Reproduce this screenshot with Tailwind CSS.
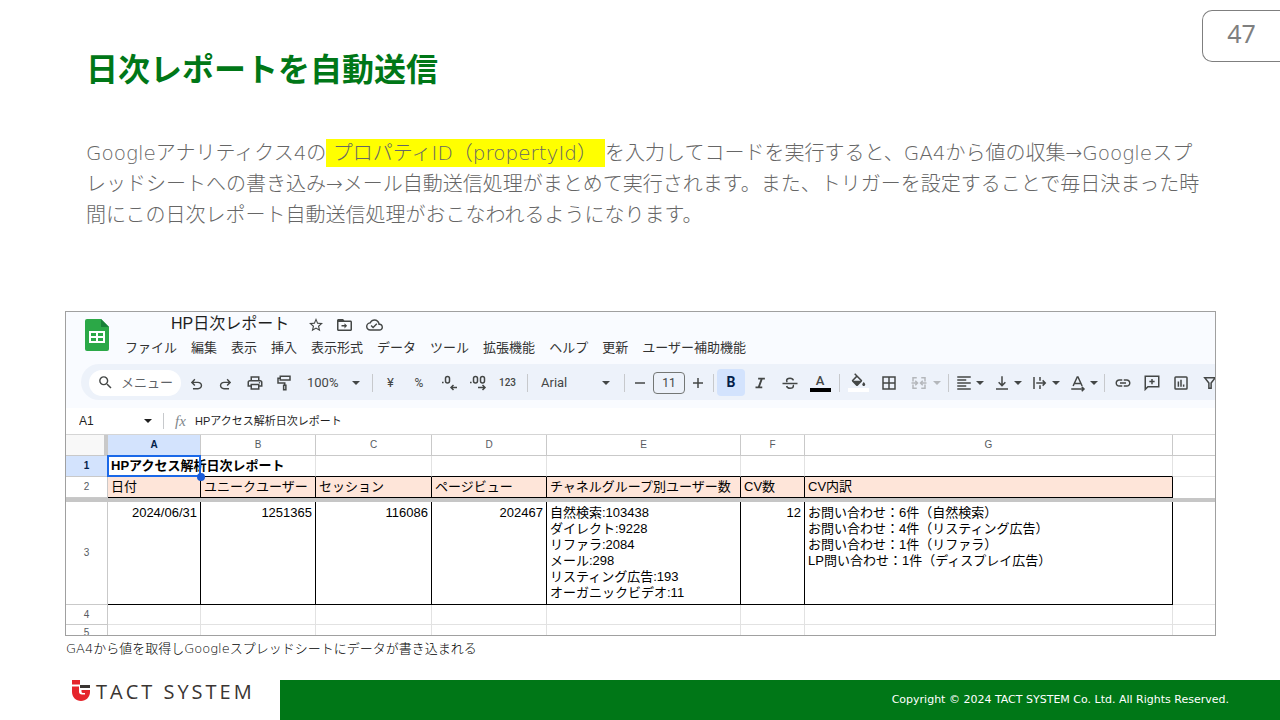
<!DOCTYPE html>
<html lang="ja">
<head>
<meta charset="utf-8">
<title>日次レポートを自動送信</title>
<script src="https://cdn.jsdelivr.net/npm/@tailwindcss/browser@4"></script>
</head>
<body class="bg-white">
<svg class="hidden" aria-hidden="true">
  <symbol id="caret" viewBox="0 0 8 8"><path d="M0 2h8L4 6z" fill="currentColor"/></symbol>
</svg>
<div class="flex min-h-screen flex-col overflow-hidden font-['DejaVu_Sans','Noto_Sans_CJK_JP',sans-serif]">
  <header class="flex items-start justify-between pt-[10px]">
    <h1 class="pt-[33px] pl-[86px] font-['Noto_Sans_CJK_JP',sans-serif] text-[32px] leading-[48px] font-bold text-[#007717]">日次レポートを自動送信</h1>
    <div class="flex h-[52px] w-[78px] justify-center rounded-l-[10px] border border-r-0 border-[#7f7f7f] pt-[6px] font-['Noto_Sans',sans-serif] text-[25px] leading-[32px] text-[#7f7f7f]">47</div>
  </header>

  <main class="flex-1">
    <p class="mt-[47px] ml-[86px] text-[20px] leading-[31px] font-light whitespace-nowrap text-[#666666]">Googleアナリティクス4の<mark class="bg-[#ffff00] py-[2px] pr-[8px] text-[#666666]"> プロパティID（propertyId）</mark>を入力してコードを実行すると、GA4から値の収集→Googleスプ<br>レッドシートへの書き込み→メール自動送信処理がまとめて実行されます。また、トリガーを設定することで毎日決まった時<br>間にこの日次レポート自動送信処理がおこなわれるようになります。</p>

    <figure class="mt-[80px] mr-[64px] ml-[65px]">
      <div class="h-[325px] overflow-hidden border border-[#a0a0a0] bg-[#f9fbff] font-['Liberation_Sans','Noto_Sans_CJK_JP',sans-serif] text-[#1f1f1f]">
        <div class="flex h-[52px] pl-[19px]">
          <svg class="mt-[7px] h-[32px] w-[24px]" viewBox="0 0 24 32"><path d="M2 0h14l8 8v22a2 2 0 0 1-2 2H2a2 2 0 0 1-2-2V2a2 2 0 0 1 2-2z" fill="#2ba847"/><path d="M16 0l8 8h-8z" fill="#188038"/><path d="M4 12h16v12H4zM6 14v3h5v-3zM13 14v3h5v-3zM6 19v3h5v-3zM13 19v3h5v-3z" fill="#fff" fill-rule="evenodd"/></svg>
          <div class="flex flex-col">
            <div class="flex h-[24px] items-center gap-[14px] pl-[62px] text-[#444746]">
              <span class="mr-[6px] text-[16px] leading-[24px] text-[#1f1f1f]">HP日次レポート</span>
              <button aria-label="スター"><svg class="mt-[2px] size-[14px]" viewBox="2 2 20 20" fill="currentColor"><path d="M22 9.24l-7.19-.62L12 2 9.19 8.63 2 9.24l5.46 4.73L5.82 21 12 17.27 18.18 21l-1.63-7.03L22 9.24zM12 15.4l-3.76 2.27 1-4.28-3.32-2.88 4.38-.38L12 6.1l1.71 4.04 4.38.38-3.32 2.88 1 4.28L12 15.4z"/></svg></button>
              <button aria-label="移動"><svg class="mt-[2px] h-[12px] w-[15px]" viewBox="2 4 20 16" fill="currentColor"><path d="M20 6h-8l-2-2H4c-1.100 0-2 .9-2 2v12c0 1.100.9 2 2 2h16c1.100 0 2-.9 2-2V8c0-1.100-.9-2-2-2zm0 12H4V8h16v10zM12 9.500l3.500 3.500-3.500 3.500v-2.500H8v-2h4z"/></svg></button>
              <button aria-label="保存状態"><svg class="mt-[2px] h-[12px] w-[17px]" viewBox="0 4 24 16" fill="currentColor"><path d="M19.350 10.040C18.670 6.590 15.640 4 12 4 9.110 4 6.610 5.640 5.350 8.040 2.340 8.360 0 10.910 0 14c0 3.310 2.690 6 6 6h13c2.760 0 5-2.240 5-5 0-2.640-2.050-4.780-4.650-4.960zM19 18H6c-2.210 0-4-1.790-4-4s1.790-4 4-4h.71C7.370 7.690 9.480 6 12 6c3.040 0 5.500 2.460 5.500 5.500v.5H19c1.660 0 3 1.340 3 3s-1.340 3-3 3zM10 14.200l-2.100-2.100-1.400 1.400L10 17l6-6-1.400-1.400z"/></svg></button>
            </div>
            <nav class="flex gap-[14px] pl-[16px] text-[13px] leading-[24px] whitespace-nowrap text-[#333]">
              <button>ファイル</button><button>編集</button><button>表示</button><button>挿入</button><button>表示形式</button><button>データ</button><button>ツール</button><button>拡張機能</button><button>ヘルプ</button><button>更新</button><button>ユーザー補助機能</button>
            </nav>
          </div>
        </div>

        <div class="mb-2 ml-[15px] flex h-[36px] items-center overflow-hidden rounded-l-full bg-[#edf2fa] pt-px pl-2 font-['Roboto','Noto_Sans_CJK_JP',sans-serif] text-[13px] text-[#444746] [&>*]:shrink-0">
          <label class="flex h-[26px] w-[92px] items-center gap-[7px] rounded-full bg-white pl-[8px]">
            <svg class="size-[17px] shrink-0" viewBox="0 0 24 24" fill="currentColor"><path d="M15.500 14h-.79l-.28-.27A6.471 6.471 0 0 0 16 9.500 6.500 6.500 0 1 0 9.500 16c1.610 0 3.090-.59 4.230-1.570l.27.28v.79l5 4.990L20.490 19l-4.990-5zm-6 0C7.010 14 5 11.990 5 9.500S7.010 5 9.500 5 14 7.010 14 9.500 11.990 14 9.500 14z"/></svg>
            <input class="w-[54px] text-[13px] placeholder-[#5f6368]" placeholder="メニュー" aria-label="メニュー">
          </label>
          <button class="flex w-[30px] justify-center pt-[3px]" aria-label="元に戻す"><svg class="size-[17px]" viewBox="0 0 24 24" fill="currentColor"><path d="M7 19v-2h7.100q1.575 0 2.738-1T18 13.500 16.837 11 14.100 10H7.800l2.600 2.600L9 14 4 9l5-5 1.400 1.400L7.800 8h6.300q2.425 0 4.163 1.575T20 13.500t-1.737 3.925T14.100 19z"/></svg></button>
          <button class="flex w-[29px] justify-center pt-[3px]" aria-label="やり直し"><svg class="size-[17px]" viewBox="0 0 24 24" fill="currentColor"><path transform="matrix(-1 0 0 1 24 0)" d="M7 19v-2h7.100q1.575 0 2.738-1T18 13.500 16.837 11 14.100 10H7.800l2.600 2.600L9 14 4 9l5-5 1.400 1.400L7.800 8h6.300q2.425 0 4.163 1.575T20 13.500t-1.737 3.925T14.100 19z"/></svg></button>
          <button class="flex w-[29px] justify-center" aria-label="印刷"><svg class="size-[18px]" viewBox="0 0 24 24" fill="currentColor"><path d="M19 8h-1V3H6v5H5c-1.660 0-3 1.340-3 3v6h4v4h12v-4h4v-6c0-1.660-1.340-3-3-3zM8 5h8v3H8V5zm8 12v2H8v-4h8v2zm2-2v-2H6v2H4v-4c0-.55.45-1 1-1h14c.55 0 1 .45 1 1v4h-2z"/><circle cx="18" cy="11.500" r="1"/></svg></button>
          <button class="flex w-[29px] justify-center" aria-label="書式を貼り付け"><svg class="size-[18px]" viewBox="0 0 24 24" fill="none" stroke="currentColor" stroke-width="2"><path d="M7 3h13v5H7zM7 5.500H4V12h9v3"/><path d="M11.500 15h3v6h-3z"/></svg></button>
          <div class="relative w-[69px]">
            <select class="w-full appearance-none pl-[9px] leading-[20px]" aria-label="ズーム"><option>100%</option></select>
            <svg class="pointer-events-none absolute top-[6px] right-[7px] size-[8px]"><use href="#caret"/></svg>
          </div>
          <div class="mr-[4px] ml-[5px] h-[18px] w-px bg-[#c7c9cc]"></div>
          <button class="w-[27px]">¥</button>
          <button class="w-[30px] text-[12px]">%</button>
          <button class="flex w-[29px] justify-center" aria-label="小数点以下の桁数を減らす"><svg class="h-[18px] w-[18px]" viewBox="0 0 18 18" fill="none" stroke="currentColor" stroke-width="1.500"><path d="M2 8.500h1.600" /><rect x="5.500" y="2.500" width="4" height="6.500" rx="2"/><path d="M17 13.500h-6M13.500 11l-2.500 2.500 2.500 2.500"/></svg></button>
          <button class="flex w-[30px] justify-center" aria-label="小数点以下の桁数を増やす"><svg class="h-[18px] w-[18px]" viewBox="0 0 18 18" fill="none" stroke="currentColor" stroke-width="1.500"><path d="M1 8.500h1.600"/><rect x="4.500" y="2.500" width="4" height="6.500" rx="2"/><rect x="11.500" y="2.500" width="4" height="6.500" rx="2"/><path d="M9 13.500h7M13.500 11l2.500 2.500-2.500 2.500"/></svg></button>
          <button class="w-[29px] text-[10px] font-medium">123</button>
          <div class="mr-[4px] ml-[5px] h-[18px] w-px bg-[#c7c9cc]"></div>
          <div class="relative w-[87px]">
            <select class="w-full appearance-none pl-[9px] leading-[20px]" aria-label="フォント"><option>Arial</option></select>
            <svg class="pointer-events-none absolute top-[6px] right-[9px] size-[8px]"><use href="#caret"/></svg>
          </div>
          <div class="mr-[4px] ml-[5px] h-[18px] w-px bg-[#c7c9cc]"></div>
          <button class="flex w-[22px] justify-center" aria-label="縮小"><svg class="size-[10px]" viewBox="0 0 10 10"><path d="M0 5h10" stroke="currentColor" stroke-width="1.500"/></svg></button>
          <input class="mx-[2px] h-[22px] w-[32px] rounded-[4px] border border-[#747775] text-center text-[12px]" value="11" aria-label="フォントサイズ">
          <button class="flex w-[22px] justify-center" aria-label="拡大"><svg class="size-[10px]" viewBox="0 0 10 10"><path d="M0 5h10M5 0v10" stroke="currentColor" stroke-width="1.500"/></svg></button>
          <div class="mr-[3px] ml-[4px] h-[18px] w-px bg-[#c7c9cc]"></div>
          <button class="h-[27px] w-[28px] rounded-[4px] bg-[#d3e3fd] text-[14px] font-bold text-[#041e49]">B</button>
          <button class="flex w-[30px] justify-center" aria-label="斜体"><svg class="size-[18px]" viewBox="0 0 24 24" fill="currentColor"><path d="M9.500 5v2.400h3.200L9.300 16.600H6V19h9v-2.400h-3l3.400-9.200H18.500V5z"/></svg></button>
          <button class="flex w-[30px] justify-center" aria-label="取り消し線"><svg class="size-[18px]" viewBox="0 0 24 24" fill="none" stroke="currentColor" stroke-width="2"><path d="M2 12.500h20M16.500 8.500C16 6.500 14.500 5.500 12 5.500c-3 0-4.500 1.500-4.500 3 0 .8.300 1.500 1 2M7.500 16c.5 2 2 3 4.500 3 3 0 4.500-1.500 4.500-3 0-.5-.1-1-.4-1.400"/></svg></button>
          <button class="flex w-[30px] flex-col items-center text-[13px] leading-[14px] font-medium">A<span class="h-[4px] w-[21px] bg-black"></span></button>
          <div class="mx-[4px] h-[18px] w-px bg-[#c7c9cc]"></div>
          <button class="flex w-[29px] flex-col items-center" aria-label="塗りつぶし"><svg class="h-[14px] w-[15px]" viewBox="2 0 20 18" fill="currentColor"><path d="M16.560 8.940L7.620 0 6.210 1.410l2.380 2.380-5.150 5.150c-.59.59-.59 1.540 0 2.120l5.500 5.500c.29.29.68.44 1.060.44s.77-.15 1.060-.44l5.500-5.500c.59-.58.59-1.530 0-2.120zM5.210 10L10 5.210 14.790 10zM19 11.500s-2 2.170-2 3.500c0 1.100.9 2 2 2s2-.9 2-2c0-1.330-2-3.500-2-3.500z"/></svg><span class="mt-px h-[4px] w-[21px] bg-white"></span></button>
          <button class="flex w-[31px] justify-center" aria-label="枠線"><svg class="size-[18px]" viewBox="0 0 24 24" fill="none" stroke="currentColor" stroke-width="2"><path d="M4 4h16v16H4zM12 4v16M4 12h16"/></svg></button>
          <button class="flex w-[40px] items-center pl-[6px] text-[#b4b7bb]" aria-label="セルを結合"><svg class="mr-[5px] size-[18px]" viewBox="0 0 24 24" fill="none" stroke="currentColor" stroke-width="2"><path d="M9 5H4v5M15 5h5v5M9 19H4v-5M15 19h5v-5M2 12h7M22 12h-7M7 9l3 3-3 3M17 9l-3 3 3 3"/></svg><svg class="size-[8px]"><use href="#caret"/></svg></button>
          <div class="mr-[3px] ml-[4px] h-[18px] w-px bg-[#c7c9cc]"></div>
          <button class="mr-1 flex w-[34px] items-center gap-[3px] pl-[3px]" aria-label="水平方向の配置"><svg class="size-[18px] shrink-0" viewBox="0 0 24 24" fill="none" stroke="currentColor" stroke-width="2"><path d="M3 4h18M3 8h12M3 12h18M3 16h12M3 20h18"/></svg><svg class="size-[8px] shrink-0"><use href="#caret"/></svg></button>
          <button class="mr-1 flex w-[34px] items-center gap-[3px] pl-[3px]" aria-label="垂直方向の配置"><svg class="size-[18px] shrink-0" viewBox="0 0 24 24" fill="none" stroke="currentColor" stroke-width="2"><path d="M12 3v12M7.500 11l4.500 4.500 4.500-4.500M4 20h16"/></svg><svg class="size-[8px] shrink-0"><use href="#caret"/></svg></button>
          <button class="mr-1 flex w-[34px] items-center gap-[3px] pl-[3px]" aria-label="テキストの折り返し"><svg class="size-[18px] shrink-0" viewBox="0 0 24 24" fill="none" stroke="currentColor" stroke-width="2"><path d="M4 4v16M12 4v5M12 15v5M7 12h12M15.500 8.500l3.500 3.500-3.500 3.500"/></svg><svg class="size-[8px] shrink-0"><use href="#caret"/></svg></button>
          <button class="flex w-[34px] items-center gap-[3px] pl-[3px]" aria-label="テキストの回転"><svg class="size-[18px] shrink-0" viewBox="0 0 24 24" fill="none" stroke="currentColor" stroke-width="2"><path d="M5.500 16L11 4h1l5.500 12M7.500 12.500h8M3 20h17M17 17l3 3-3 3"/></svg><svg class="size-[8px] shrink-0"><use href="#caret"/></svg></button>
          <div class="mr-[3px] ml-[4px] h-[18px] w-px bg-[#c7c9cc]"></div>
          <button class="flex w-[29px] justify-center" aria-label="リンク"><svg class="size-[18px]" viewBox="0 0 24 24" fill="currentColor"><path d="M3.900 12c0-1.710 1.390-3.100 3.100-3.100h4V7H7c-2.760 0-5 2.240-5 5s2.240 5 5 5h4v-1.900H7c-1.710 0-3.100-1.390-3.100-3.100zM8 13h8v-2H8v2zm9-6h-4v1.900h4c1.710 0 3.100 1.390 3.100 3.100s-1.390 3.100-3.100 3.100h-4V17h4c2.760 0 5-2.240 5-5s-2.240-5-5-5z"/></svg></button>
          <button class="flex w-[29px] justify-center" aria-label="コメント"><svg class="size-[18px]" viewBox="0 0 24 24" fill="none" stroke="currentColor" stroke-width="2"><path d="M3 3h18v14H6.500L3 20.500zM12 6.500v7M8.500 10h7"/></svg></button>
          <button class="flex w-[29px] justify-center" aria-label="グラフ"><svg class="size-[18px]" viewBox="0 0 24 24" fill="none" stroke="currentColor" stroke-width="2"><rect x="4" y="4" width="16" height="16" rx="1"/><path d="M8.500 10v7M12 7.500V17M15.500 14v3"/></svg></button>
          <button class="flex w-[29px] justify-center" aria-label="フィルタ"><svg class="size-[18px]" viewBox="0 0 24 24" fill="none" stroke="currentColor" stroke-width="2"><path d="M5 5h14l-5.500 7v7h-3v-7z"/></svg></button>
        </div>

        <div class="flex h-[26px] items-center bg-white text-[12px]">
          <div class="relative w-[97px]">
            <select class="w-full appearance-none pl-[13px] leading-[20px]" aria-label="セル"><option>A1</option></select>
            <svg class="pointer-events-none absolute top-[6px] right-[11px] size-[8px]"><use href="#caret"/></svg>
          </div>
          <div class="h-[16px] w-px bg-[#c7c9cc]"></div>
          <span class="ml-[11px] w-[20px] font-['Liberation_Serif',serif] text-[15px] text-[#80868b] italic">fx</span>
          <input class="min-w-0 flex-1 text-[11px]" value="HPアクセス解析日次レポート" aria-label="数式">
        </div>

        <table class="w-full table-fixed border-separate border-spacing-0 border-t border-[#d5d5d5] bg-white text-left text-[13px] leading-[16px] text-black [&_td]:whitespace-nowrap">
          <colgroup><col class="w-[42px]"><col class="w-[93px]"><col class="w-[115px]"><col class="w-[116px]"><col class="w-[115px]"><col class="w-[194px]"><col class="w-[64px]"><col class="w-[368px]"><col></colgroup>
          <thead class="text-center text-[10px] text-[#575b5f]">
            <tr class="h-[21px] [&>th]:border-b [&>th]:border-[#c9c9c9] [&>th]:p-0 [&>th]:font-normal">
              <th class="border-r-4 border-r-[#bcbcbc] bg-[#f8f8f8]"></th>
              <th class="border-r bg-[#d3e3fd]"><b class="text-[#041e49]">A</b></th><th class="border-r">B</th><th class="border-r">C</th><th class="border-r">D</th><th class="border-r">E</th><th class="border-r">F</th><th class="border-r">G</th><th></th>
            </tr>
          </thead>
          <tbody class="[&_th]:border-r [&_th]:border-b [&_th]:border-[#c9c9c9] [&_th]:p-0 [&_th]:text-center [&_th]:text-[10px] [&_th]:font-normal [&_th]:text-[#575b5f]">
            <tr class="h-[21px] [&>td]:border-r [&>td]:border-b [&>td]:border-r-[#e2e2e2] [&>td]:border-b-black [&>td]:py-0">
              <th class="bg-[#d3e3fd]"><b class="text-[#041e49]">1</b></th>
              <td class="relative overflow-visible px-[3px] font-bold"><div class="relative w-0">HPアクセス解析日次レポート</div><span class="absolute -inset-px border-2 border-[#1a68e8]"></span><span class="absolute -right-[5px] -bottom-[5px] size-[8px] rounded-full bg-[#1b5bd8]"></span></td>
              <td></td><td></td><td></td><td></td><td></td><td></td><td class="!border-r-0 !border-b-[#e2e2e2]"></td>
            </tr>
            <tr class="h-[21px] [&>td]:border-r [&>td]:border-b [&>td]:border-black [&>td]:bg-[#fee5d9] [&>td]:px-[3px] [&>td]:py-0">
              <th>2</th>
              <td>日付</td><td>ユニークユーザー</td><td>セッション</td><td>ページビュー</td><td>チャネルグループ別ユーザー数</td><td>CV数</td><td>CV内訳</td><td class="!border-0 !bg-white"></td>
            </tr>
            <tr class="h-[4px]"><td colspan="9" class="bg-[#c6c6c6] p-0 text-[0px] leading-none"></td></tr>
            <tr class="h-[103px] align-top [&>td]:border-r [&>td]:border-b [&>td]:border-black [&>td]:px-[3px] [&>td]:pt-[3px] [&>td]:pb-0">
              <th class="align-middle">3</th>
              <td class="text-right">2024/06/31</td><td class="text-right">1251365</td><td class="text-right">116086</td><td class="text-right">202467</td>
              <td>自然検索:103438<br>ダイレクト:9228<br>リファラ:2084<br>メール:298<br>リスティング広告:193<br>オーガニックビデオ:11</td>
              <td class="text-right">12</td>
              <td>お問い合わせ：6件（自然検索）<br>お問い合わせ：4件（リスティング広告）<br>お問い合わせ：1件（リファラ）<br>LP問い合わせ：1件（ディスプレイ広告）</td>
              <td class="!border-r-0 !border-b-[#e2e2e2]"></td>
            </tr>
            <tr class="h-[20px] [&>td]:border-r [&>td]:border-b [&>td]:border-[#e2e2e2]"><th>4</th><td></td><td></td><td></td><td></td><td></td><td></td><td></td><td class="!border-r-0"></td></tr>
            <tr class="h-[16px] leading-[14px] [&>td]:border-r [&>td]:border-[#e2e2e2]"><th>5</th><td></td><td></td><td></td><td></td><td></td><td></td><td></td><td class="!border-r-0"></td></tr>
          </tbody>
        </table>
      </div>
      <figcaption class="pl-px text-[13px] leading-[26px] font-light text-black">GA4から値を取得しGoogleスプレッドシートにデータが書き込まれる</figcaption>
    </figure>
  </main>

  <footer class="flex h-[40px]">
    <div class="flex w-[280px] items-start pl-[72px]">
      <svg class="h-[21px] w-[18px] shrink-0" viewBox="0 0 18 21"><path d="M0 0h8v4.500H0zM0 6.500h7v5q0 3 3 3h3v-1.500h-2q-1.500 0-1.500-1.500V10H18v2c0 5-4 9-9 9s-9-4-9-9z" fill="#e5242b"/><path d="M8 5h10v3H8z" fill="#3a3532"/></svg>
      <span class="pl-[6px] font-['Open_Sans',sans-serif] text-[20px] leading-[24px] tracking-[3px] whitespace-nowrap text-[#3a3532]">TACT SYSTEM</span>
    </div>
    <div class="flex flex-1 items-center justify-end bg-[#007717] pr-[51px] text-[11px] text-white">Copyright © 2024 TACT SYSTEM Co. Ltd. All Rights Reserved.</div>
  </footer>
</div>
</body>
</html>
